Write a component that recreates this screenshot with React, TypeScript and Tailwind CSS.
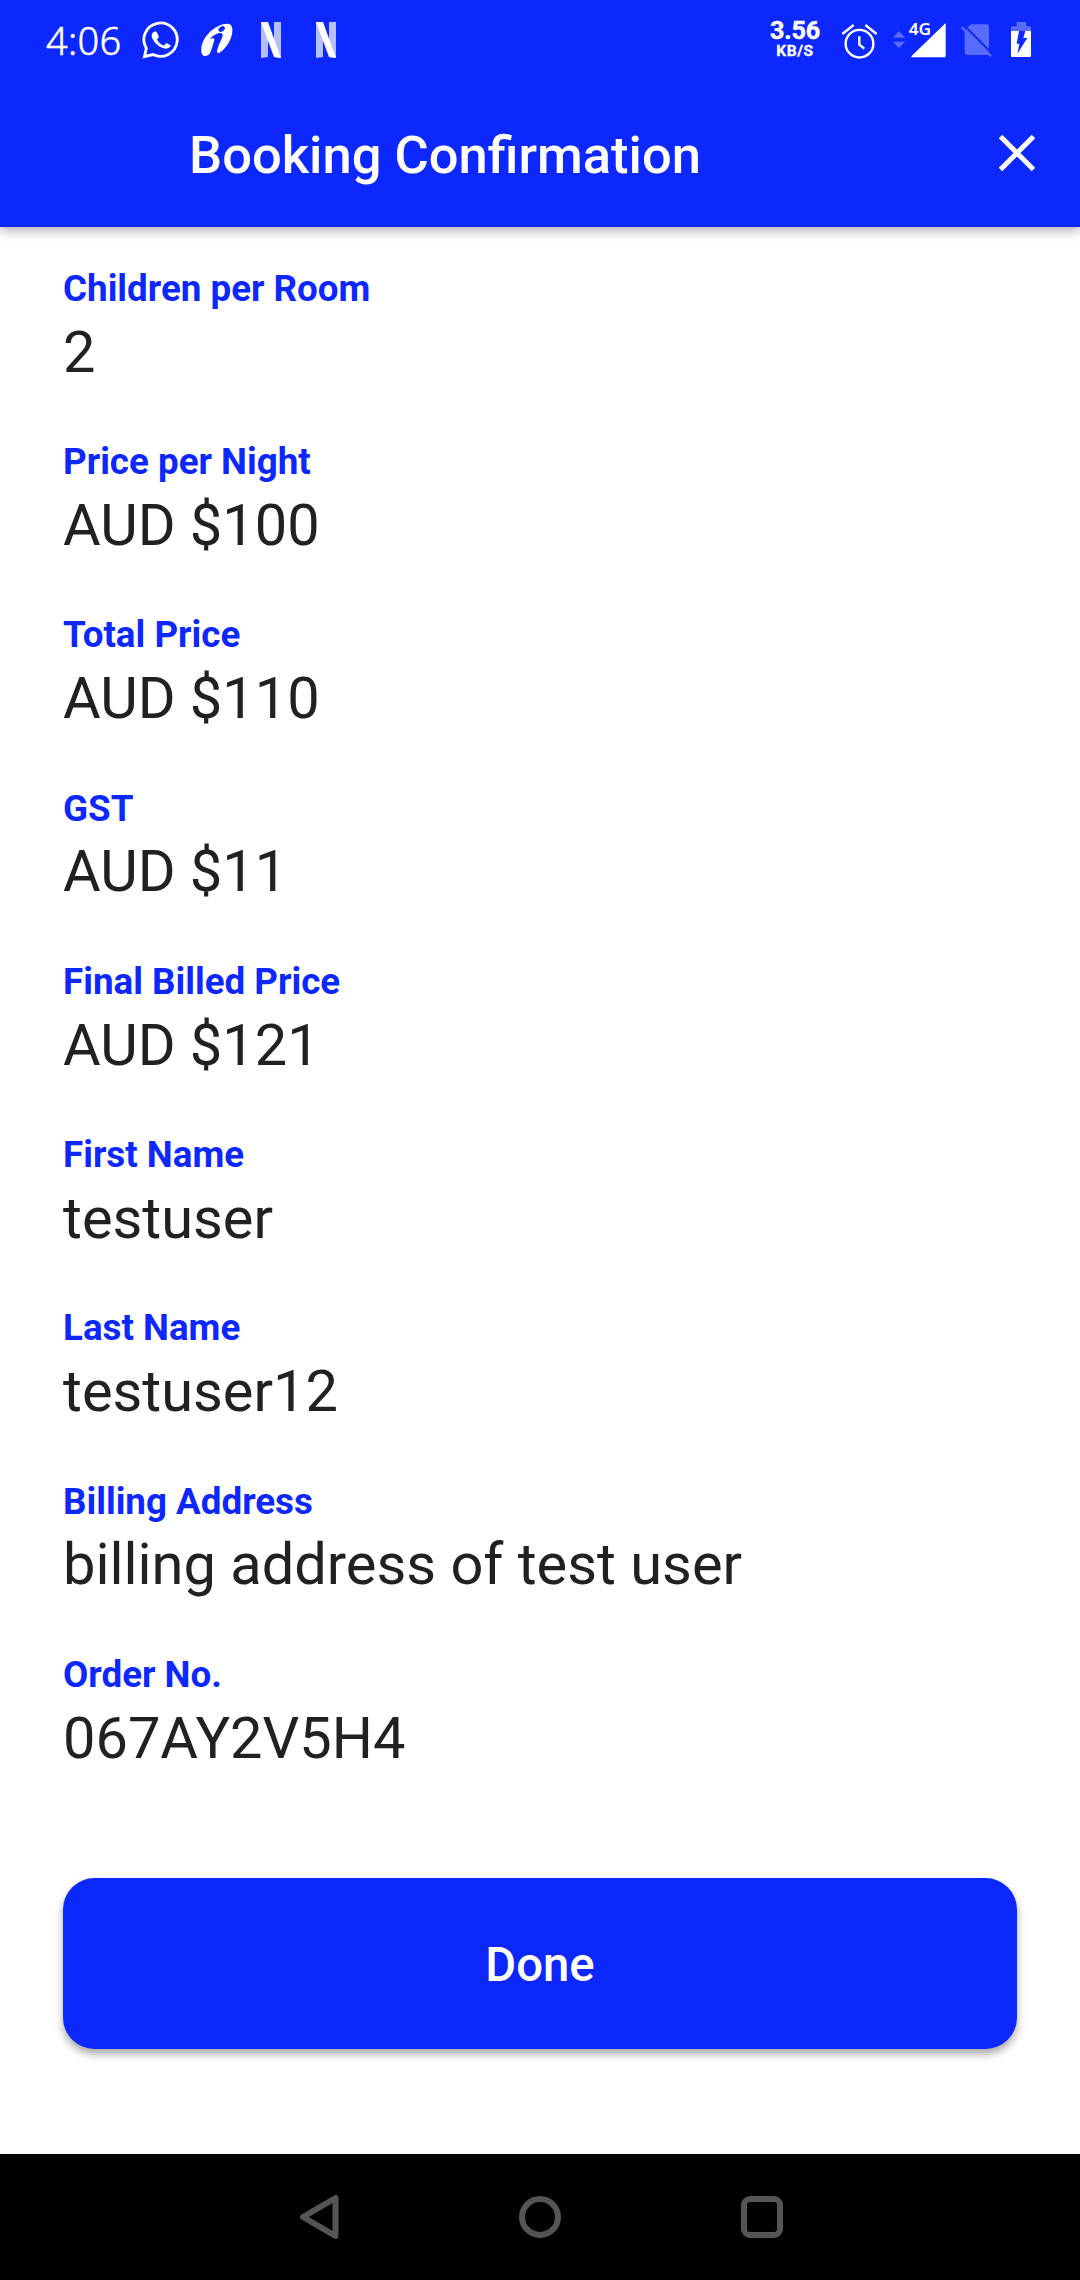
import React from "react";

const fields = [
  { label: "Children per Room", value: "2" },
  { label: "Price per Night", value: "AUD $100" },
  { label: "Total Price", value: "AUD $110" },
  { label: "GST", value: "AUD $11" },
  { label: "Final Billed Price", value: "AUD $121" },
  { label: "First Name", value: "testuser" },
  { label: "Last Name", value: "testuser12" },
  { label: "Billing Address", value: "billing address of test user" },
  { label: "Order No.", value: "067AY2V5H4" },
];

function ChatIcon() {
  return (
    <svg className="ml-[20px] h-10 w-10" viewBox="333 60 120 120" fill="none">
      <path d="M343.500 169.500 L349 145 A50 50 0 1 1 369 163.500 Z" stroke="#fff" strokeWidth="8.5" strokeLinejoin="miter" />
      <path
        d="M373 95 C378 94 380 96 382 100 L386 109 C387 112 386 113 381 119 C386 128 393 134 402 137 C407 131 408 129 411 130 L421 135 C424 137 419 143 413 145 C406 148 392 144 380 133 C368 122 365 112 365 106 C365 101 369 96 373 95 Z"
        fill="#fff"
      />
    </svg>
  );
}

function BankIcon() {
  return (
    <svg className="ml-[19px] h-10 w-[34px]" viewBox="510 60 102 120">
      <path
        d="M591 71 C603 71 608 79 607 94 C606 115 592 142 571 157 C566 160 560 160 561 153 C563 142 571 125 577 111 C580 103 577 99 571 99 C562 99 547 107 540 117 C547 114 554 114 553 120 C549 133 545 149 540 160 C535 168 526 169 520 167 C514 163 513 154 514 145 C516 113 553 73 591 71 Z"
        fill="#fff"
      />
      <ellipse cx="575" cy="87" rx="10.5" ry="7" transform="rotate(-35 575 87)" fill="#0d27ff" />
    </svg>
  );
}

function LetterIcon({ className }: { className: string }) {
  return (
    <svg className={className} viewBox="690 60 66 120">
      <path d="M693 66H714V171L693 174ZM732 66H753V174L732 171Z" fill="#b6beff" />
      <path d="M693 66H714L753 174L732 171Z" fill="#fff" />
    </svg>
  );
}

function AlarmIcon() {
  return (
    <svg className="ml-[15px] h-10 w-[39px]" viewBox="300 60 117 120" fill="none" stroke="#fff" strokeWidth="7">
      <circle cx="358.500" cy="131" r="41.500" />
      <path d="M358 109V134L373 146" />
      <path d="M307 102L341 75M376 75L410 102" />
    </svg>
  );
}

function SignalIcons() {
  return (
    <>
      <svg className="ml-[13px] h-10 w-[14px]" viewBox="456 60 42 120" fill="#5a6cff">
        <path d="M477 93L495 113H459ZM459 125H495L477 145Z" />
      </svg>
      <svg className="ml-[2px] h-[60px] w-[39px]" viewBox="504 30 117 180" fill="#fff">
        <path d="M617 69V168Q617 172 613 172H514V169Z" />
        <text x="506" y="105" fontFamily="Noto Sans, sans-serif" fontWeight="600" fontSize="49" textLength="67" lengthAdjust="spacingAndGlyphs">4G</text>
      </svg>
      <svg className="ml-[13px] h-10 w-[33px]" viewBox="660 60 99 120">
        <path d="M674 91L682 83L692 73H740Q747 73 747 80V165H682Q674 165 674 157Z" fill="#5a6cff" />
        <path d="M671 75L759 163" stroke="#0d27ff" strokeWidth="6" />
        <path d="M665 81L753 169" stroke="#5a6cff" strokeWidth="7" />
      </svg>
      <svg className="ml-[17px] h-10 w-[22px]" viewBox="810 60 66 120">
        <path d="M813 93V84Q813 79 818 79H830V66H858V79H868Q873 79 873 84V93Z" fill="#5a6cff" />
        <path d="M813 93H873V167Q873 171 869 171H817Q813 171 813 167Z" fill="#fff" />
        <path d="M837 93H856L850 114H862L832 161L838 131H830Z" fill="#0d27ff" />
      </svg>
    </>
  );
}

export default function App() {
  return (
    <div className="flex h-[2280px] w-[1080px] flex-col bg-white font-['Roboto',sans-serif]">
      <header className="z-10 flex h-[227px] flex-col bg-[#0d27ff] text-white shadow-[0_4px_10px_rgba(0,0,0,0.3)]">
        <div className="flex h-20 items-center pl-[46px]">
          <div className="w-[75px] whitespace-nowrap font-['Noto_Sans',sans-serif] text-[38px] font-light leading-[80px] tracking-[0.3px] [-webkit-text-stroke:0.5px_white]">4:06</div>
          <ChatIcon />
          <BankIcon />
          <LetterIcon className="ml-[26px] h-10 w-[22px]" />
          <LetterIcon className="ml-[33px] h-10 w-[22px]" />
          <div className="ml-[428px] flex w-[60px] flex-col items-center whitespace-nowrap font-bold">
            <span className="-mt-[2px] text-[25.250px] leading-[24px] tracking-[-0.2px] [-webkit-text-stroke:0.4px_white]">3.56</span>
            <span className="text-[15.500px] leading-[16px] tracking-[0.6px] [-webkit-text-stroke:0.3px_white]">KB/S</span>
          </div>
          <AlarmIcon />
          <SignalIcons />
        </div>
        <div className="flex h-[147px] items-start justify-between pl-[189px] pr-[45px]">
          <h1 className="pt-[44px] text-[52.5px] font-medium leading-[62px]">Booking Confirmation</h1>
          <button className="mt-[55px]" aria-label="Close">
            <svg className="h-9 w-9" viewBox="0 0 36 36" stroke="#fff" strokeWidth="5">
              <path d="M1.500 1.500L34.500 34.500M34.500 1.500L1.500 34.500" />
            </svg>
          </button>
        </div>
      </header>
      <main className="flex flex-1 flex-col px-[63px] pt-[33.85px]">
        <dl className="flex flex-col gap-[46.55px]">
          {fields.map((f) => (
            <div key={f.label}>
              <dt className="text-[36.75px] font-bold leading-[56px] text-[#0d27ff]">{f.label}</dt>
              <dd className="-mt-[1.3px] text-[57.75px] leading-[72px] text-[#212121]">{f.value}</dd>
            </div>
          ))}
        </dl>
        <button className="mt-[104.75px] h-[170.500px] rounded-[31.5px] bg-[#0d27ff] pt-[3px] text-[47.25px] font-medium text-white shadow-[0_5px_8px_rgba(0,0,0,0.35)]">
          Done
        </button>
      </main>
      <nav className="flex h-[126px] items-center bg-black pl-[299px]">
        <svg className="h-11 w-[41px]" viewBox="0 0 41 44" fill="none" stroke="#555" strokeWidth="6" strokeLinejoin="round">
          <path d="M4 22L36.500 3V41Z" />
        </svg>
        <svg className="ml-[178px] h-11 w-11" viewBox="0 0 44 44" fill="none" stroke="#555" strokeWidth="6">
          <circle cx="22" cy="22" r="18" />
        </svg>
        <svg className="ml-[178px] h-11 w-11" viewBox="0 0 44 44" fill="none" stroke="#555" strokeWidth="6">
          <rect x="4" y="4" width="36" height="36" rx="6" />
        </svg>
      </nav>
    </div>
  );
}
